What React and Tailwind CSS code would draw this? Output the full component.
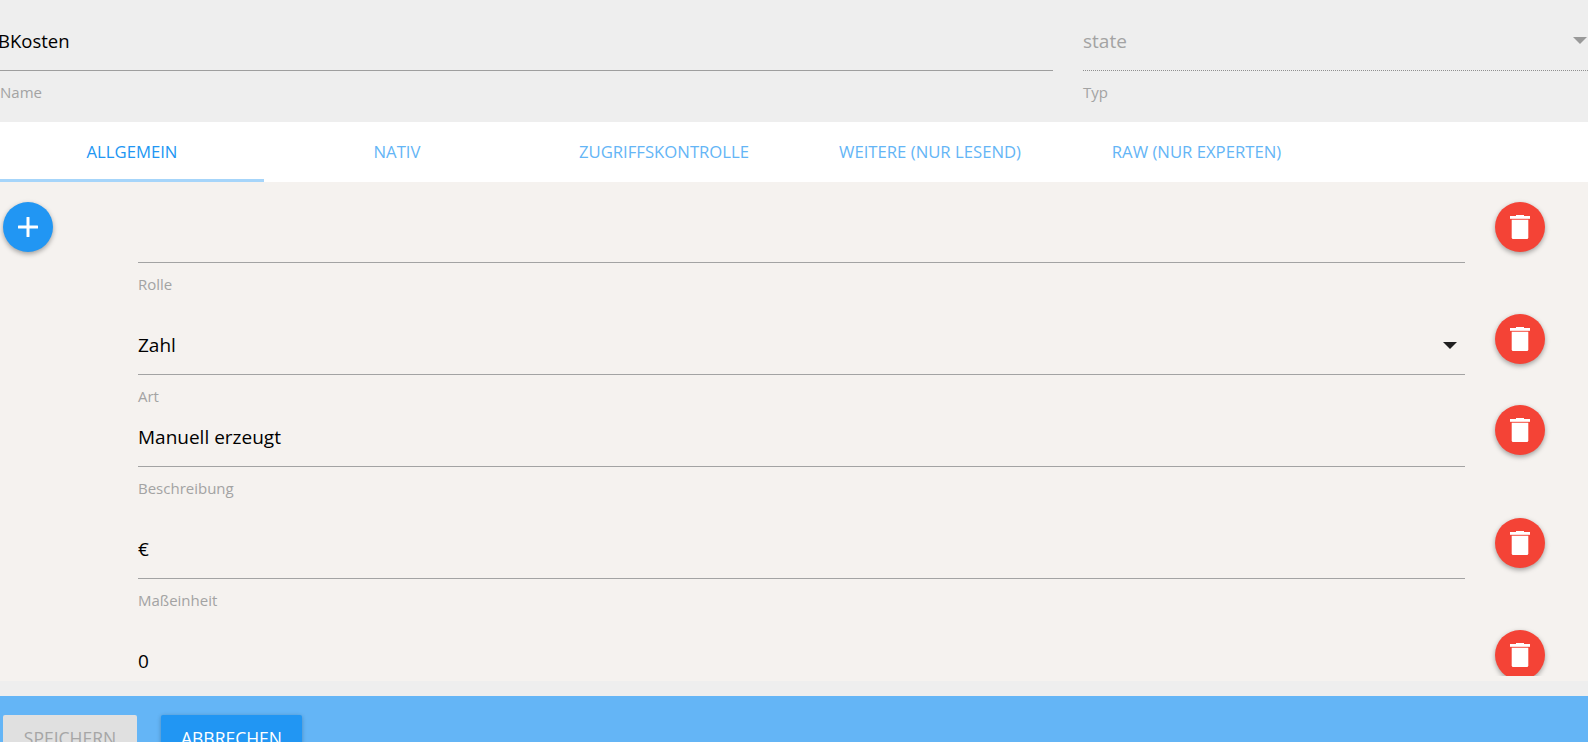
const FONT = "font-['Open_Sans','Noto_Sans',sans-serif]";

function Trash() {
  return (
    <svg width="20" height="24" viewBox="0 0 20 24" fill="white" aria-hidden="true">
      <rect x="6" y="0" width="8" height="1" />
      <path d="M0 1h20v2.8H0z" />
      <path d="M1.7 4.8h16.6v17.7a1.5 1.5 0 0 1-1.5 1.5H3.2a1.5 1.5 0 0 1-1.5-1.5z" />
    </svg>
  );
}

function Plus() {
  return (
    <svg width="20" height="20" viewBox="0 0 20 20" fill="white" aria-hidden="true">
      <rect x="8.5" y="0" width="3" height="20" rx="0.5" />
      <rect x="0" y="8.5" width="20" height="3" rx="0.5" />
    </svg>
  );
}

function Fab({ color, children }) {
  return (
    <button className={`w-[50px] h-[50px] rounded-full flex items-center justify-center shadow-[0_2px_5px_rgba(0,0,0,0.35)] shrink-0 ${color}`}>
      {children}
    </button>
  );
}

function Row({ height, value, label, select, first, fabUp }) {
  return (
    <div className={`flex items-start ${height}`}>
      <div className="w-[138px] pl-[3px] shrink-0">
        {first && (
          <Fab color="bg-[#2196f3]">
            <Plus />
          </Fab>
        )}
      </div>
      <div className="flex-1 min-w-0">
        <div className="h-[61px] border-b border-[#a3a3a3] flex items-center justify-between pt-[3px] text-[19px] text-black">
          <span>{value}</span>
          {select && <span className="mr-[8px] w-0 h-0 border-x-[7px] border-x-transparent border-t-[7px] border-t-[#1f1f1f]" />}
        </div>
        {label && <div className="mt-[11px] text-[15px] leading-[20px] text-[#a3a3a3]">{label}</div>}
      </div>
      <div className={`ml-[30px] mr-[43px] shrink-0 ${fabUp ? "-mt-[1px]" : ""}`}>
        <Fab color="bg-[#f44336]">
          <Trash />
        </Fab>
      </div>
    </div>
  );
}

const tabs = [
  ["ALLGEMEIN", "w-[264px]"],
  ["NATIV", "w-[266px]"],
  ["ZUGRIFFSKONTROLLE", "w-[268px]"],
  ["WEITERE (NUR LESEND)", "w-[264px]"],
  ["RAW (NUR EXPERTEN)", "w-[269px]"],
];

export default function App() {
  return (
    <div className={`h-[742px] w-[1588px] overflow-hidden flex flex-col bg-[#eeeeee] ${FONT}`}>
      <div className="h-[122px] flex shrink-0">
        <div className="w-[1053px] pt-[20px]">
          <div className="h-[51px] border-b border-[#9e9e9e] flex items-center pb-[8px] text-[18.5px] text-black">
            <span className="-ml-[2px]">BKosten</span>
          </div>
          <div className="mt-[11px] text-[15px] leading-[20px] text-[#a3a3a3]">Name</div>
        </div>
        <div className="ml-[30px] flex-1 pt-[20px]">
          <div className="relative h-[51px] border-b border-dotted border-[#8f8f8f] flex items-center pb-[8px] text-[19px] text-[#a3a3a3]">
            state
            <span className="absolute right-[1px] top-[17px] w-0 h-0 border-x-[7px] border-x-transparent border-t-[7px] border-t-[#999999]" />
          </div>
          <div className="mt-[11px] text-[15px] leading-[20px] text-[#a3a3a3]">Typ</div>
        </div>
      </div>

      <div className="h-[60px] bg-white flex shrink-0">
        {tabs.map(([t, w], i) => (
          <div
            key={t}
            className={`${w} h-full flex items-center justify-center text-[16.7px] ${
              i === 0 ? "text-[#2196f3] border-b-[3px] border-[#a6d5fa] pt-[3px]" : "text-[#64b5f6]"
            }`}
          >
            {t}
          </div>
        ))}
      </div>

      <div className="h-[499px] bg-[#f5f2ef] shrink-0">
        <div className="h-[494px] overflow-hidden pt-[20px]">
          <Row first height="h-[112px]" value="" label="Rolle" />
          <Row height="h-[92px]" value="Zahl" label="Art" select />
          <Row height="h-[112px]" value="Manuell erzeugt" label="Beschreibung" fabUp />
          <Row height="h-[112px]" value="€" label="Maßeinheit" />
          <Row height="h-[112px]" value="0" />
        </div>
      </div>

      <div className="h-[15px] shrink-0" />

      <div className="h-[46px] bg-[#64b5f6] shrink-0 pt-[19px] pl-[3px] flex gap-[24px] items-start">
        <button className="h-[45px] w-[134px] bg-[#e0e0e0] text-[#a6a6a6] text-[17.5px] rounded-[2px] pt-[1px]">SPEICHERN</button>
        <button className="h-[45px] w-[141px] bg-[#2196f3] text-white text-[17.5px] rounded-[2px] pt-[1px] shadow-[0_1px_4px_rgba(0,0,0,0.25)]">ABBRECHEN</button>
      </div>
    </div>
  );
}
